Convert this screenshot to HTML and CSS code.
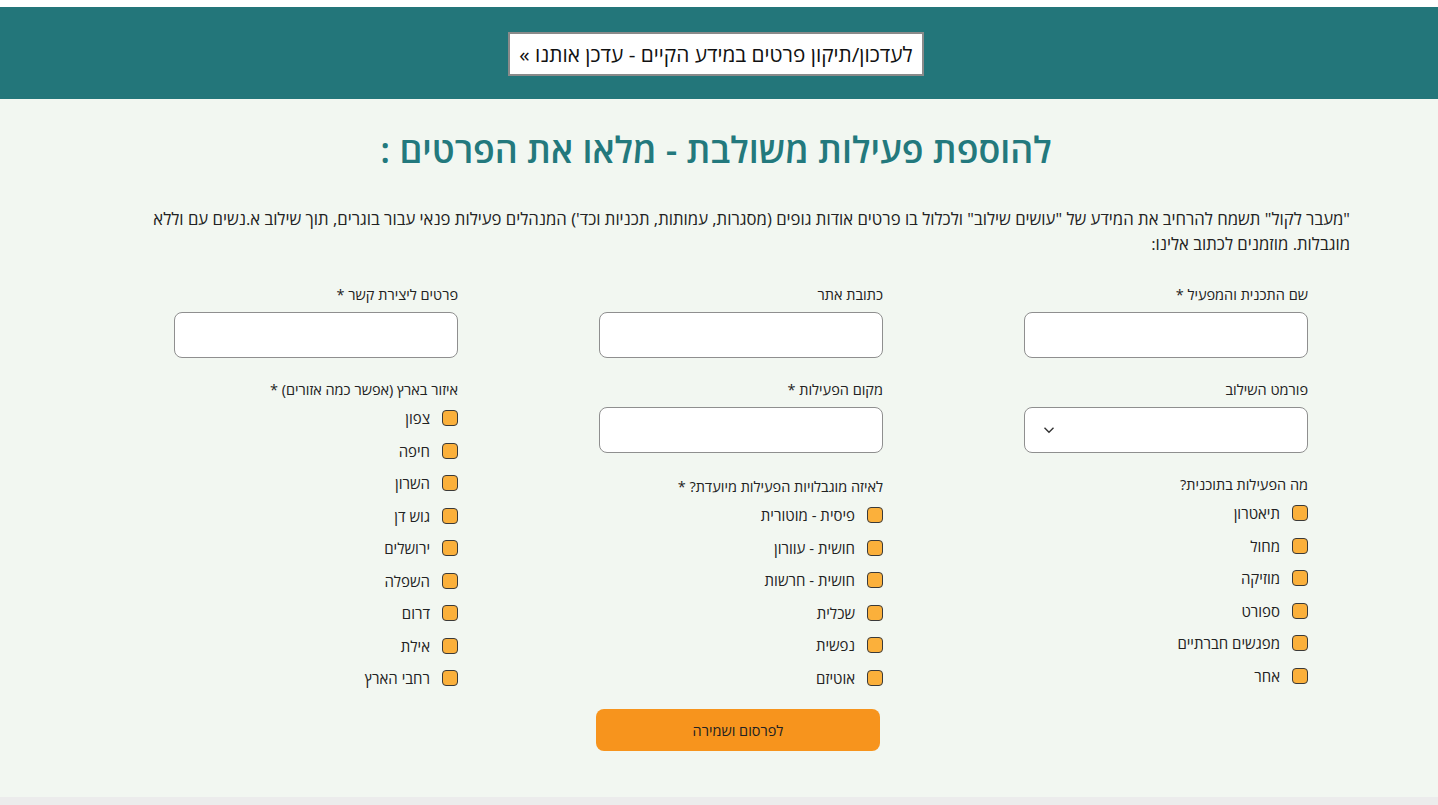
FILE: index.html
```html
<!DOCTYPE html>
<html lang="he" dir="rtl">

<head>
    <meta charset="UTF-8">
    <meta name="viewport" content="width=device-width, initial-scale=1.0">
    <title>הוספת פעילות משולבת</title>
    <link rel="stylesheet" href="styles.css">
</head>

<body>
    <header class="top-bar">
        <a class="update-link" href="#">לעדכון/תיקון פרטים במידע הקיים - עדכן אותנו &raquo;</a>
    </header>

    <main class="content">
        <h1 class="page-title">להוספת פעילות משולבת - מלאו את הפרטים :</h1>

        <p class="intro">"מעבר לקול" תשמח להרחיב את המידע של "עושים שילוב" ולכלול בו פרטים אודות גופים (מסגרות, עמותות, תכניות וכד') המנהלים פעילות פנאי עבור בוגרים, תוך שילוב א.נשים עם וללא מוגבלות. מוזמנים לכתוב אלינו:</p>

        <form class="activity-form">
            <div class="form-col">
                <label class="field">
                    <span class="field-label">שם התכנית והמפעיל *</span>
                    <input type="text" class="text-input">
                </label>
                <label class="field">
                    <span class="field-label">פורמט השילוב</span>
                    <span class="select-box">
                        <svg class="chevron" width="12" height="8" viewBox="0 0 12 8"><path d="M1.5 1.8 6 6.2l4.5-4.4" fill="none" stroke="#333" stroke-width="1.4"/></svg>
                    </span>
                </label>
                <div class="check-group">
                    <span class="field-label">מה הפעילות בתוכנית?</span>
                    <label class="check"><span class="box"></span>תיאטרון</label>
                    <label class="check"><span class="box"></span>מחול</label>
                    <label class="check"><span class="box"></span>מוזיקה</label>
                    <label class="check"><span class="box"></span>ספורט</label>
                    <label class="check"><span class="box"></span>מפגשים חברתיים</label>
                    <label class="check"><span class="box"></span>אחר</label>
                </div>
            </div>

            <div class="form-col">
                <label class="field">
                    <span class="field-label">כתובת אתר</span>
                    <input type="text" class="text-input">
                </label>
                <label class="field">
                    <span class="field-label">מקום הפעילות *</span>
                    <input type="text" class="text-input">
                </label>
                <div class="check-group disability-group">
                    <span class="field-label">לאיזה מוגבלויות הפעילות מיועדת? *</span>
                    <label class="check"><span class="box"></span>פיסית - מוטורית</label>
                    <label class="check"><span class="box"></span>חושית - עוורון</label>
                    <label class="check"><span class="box"></span>חושית - חרשות</label>
                    <label class="check"><span class="box"></span>שכלית</label>
                    <label class="check"><span class="box"></span>נפשית</label>
                    <label class="check"><span class="box"></span>אוטיזם</label>
                </div>
                <button type="button" class="submit-btn">לפרסום ושמירה</button>
            </div>

            <div class="form-col">
                <label class="field">
                    <span class="field-label">פרטים ליצירת קשר *</span>
                    <input type="text" class="text-input">
                </label>
                <div class="check-group">
                    <span class="field-label">איזור בארץ (אפשר כמה אזורים) *</span>
                    <label class="check"><span class="box"></span>צפון</label>
                    <label class="check"><span class="box"></span>חיפה</label>
                    <label class="check"><span class="box"></span>השרון</label>
                    <label class="check"><span class="box"></span>גוש דן</label>
                    <label class="check"><span class="box"></span>ירושלים</label>
                    <label class="check"><span class="box"></span>השפלה</label>
                    <label class="check"><span class="box"></span>דרום</label>
                    <label class="check"><span class="box"></span>אילת</label>
                    <label class="check"><span class="box"></span>רחבי הארץ</label>
                </div>
            </div>
        </form>
    </main>

    <footer class="bottom-strip"></footer>
</body>

</html>
```

FILE: styles.css
```css
body {
    font-family: 'Open Sans', 'Liberation Sans', 'DejaVu Sans', sans-serif;
    background-color: #fff;
    color: #222;
    margin: 0;
    padding: 0;
}

.top-bar {
    margin-top: 7px;
    height: 92px;
    background-color: #23767a;
    display: flex;
    align-items: center;
    justify-content: center;
}

.update-link {
    display: block;
    background-color: #fff;
    border: 2px solid #8a8a8a;
    padding: 0 9px;
    height: 40px;
    line-height: 40px;
    font-size: 20.8px;
    color: #111;
    text-decoration: none;
    margin-top: 1px;
    margin-right: 6px;
}

.content {
    background-color: #f2f7f1;
    padding: 24px 0 46px;
    min-height: 697px;
    box-sizing: border-box;
}

.page-title {
    margin: 0 6px 0 0;
    text-align: center;
    color: #23797d;
    font-size: 35.8px;
    font-weight: 600;
    line-height: 52px;
}

.intro {
    width: 1212px;
    margin: 31px 88px 0 0;
    font-size: 16.7px;
    line-height: 25px;
    color: #222;
}

/* three columns, right to left */
.activity-form {
    width: 1212px;
    margin: 29px 88px 0 0;
    padding: 0 42px 0 36px;
    box-sizing: border-box;
    display: flex;
    justify-content: space-between;
}

.form-col {
    width: 284px;
    display: flex;
    flex-direction: column;
}

.field {
    display: flex;
    flex-direction: column;
    margin-bottom: 22px;
}

.field-label {
    font-size: 14.5px;
    line-height: 20px;
    color: #222;
    margin-bottom: 7px;
}

.text-input,
.select-box {
    display: flex;
    align-items: center;
    height: 46px;
    box-sizing: border-box;
    border: 1px solid #8f8f8f;
    border-radius: 8px;
    background-color: #fff;
    width: 100%;
    margin: 0;
    padding: 0 12px;
}

.select-box {
    justify-content: flex-end;
    padding-left: 18px;
}

.check-group {
    display: flex;
    flex-direction: column;
}

.check-group .field-label {
    margin-bottom: 2px;
}

.disability-group {
    margin-top: 2px;
}

.check {
    display: flex;
    align-items: center;
    gap: 12px;
    height: 32.5px;
    font-size: 15px;
    color: #222;
}

.box {
    width: 16px;
    height: 16px;
    box-sizing: border-box;
    border: 1.5px solid #3a3a3a;
    border-radius: 4px;
    background-color: #fbb03b;
}

.submit-btn {
    margin-top: 15px;
    margin-right: 3px;
    width: 284px;
    height: 42px;
    border: none;
    border-radius: 8px;
    background-color: #f7941d;
    font-family: inherit;
    font-size: 14.5px;
    color: #222;
    cursor: pointer;
}

.bottom-strip {
    height: 9px;
    background-color: #ececec;
}
```
